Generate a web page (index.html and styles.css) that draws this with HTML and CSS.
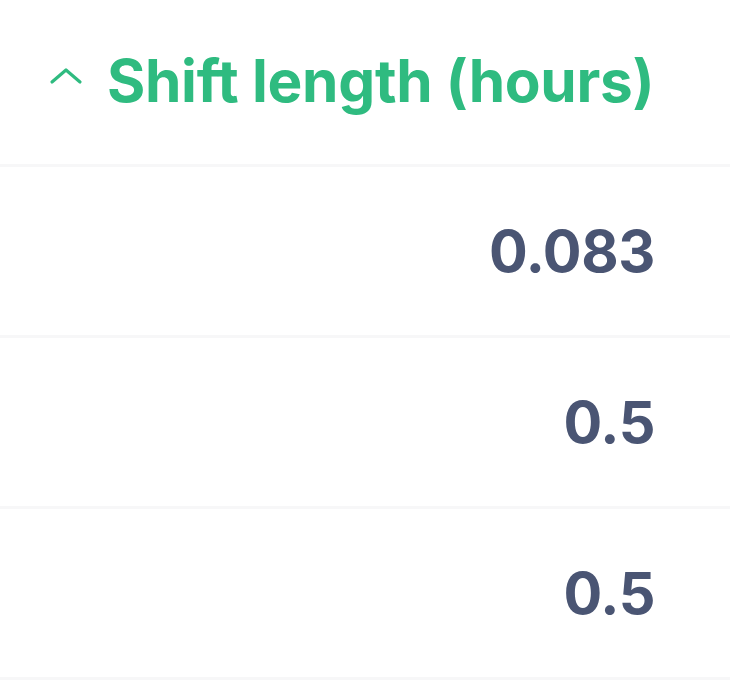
FILE: index.html
```html
<!DOCTYPE html>
<html>
<head>
<meta charset="utf-8">
<link rel="stylesheet" href="styles.css">
</head>
<body>
<div class="table">
  <div class="head">
    <svg class="chev" viewBox="0 0 34 18" width="34" height="18"><path d="M3 15 L17 3 L31 15" fill="none" stroke="#2fbb80" stroke-width="3.2" stroke-linecap="round" stroke-linejoin="round"/></svg>
    <span class="title">Shift length (hours)</span>
  </div>
  <div class="row"><span class="num">0.083</span></div>
  <div class="row"><span class="num">0.5</span></div>
  <div class="row"><span class="num">0.5</span></div>
</div>
</body>
</html>
```
FILE: styles.css
```css
html, body {
  margin: 0;
  padding: 0;
  background: #ffffff;
}
.table {
  width: 730px;
  font-family: Inter, "Noto Sans", sans-serif;
  font-weight: 700;
}
.head {
  height: 167px;
  display: flex;
  align-items: center;
  padding-left: 49px;
  padding-bottom: 4px;
  gap: 24px;
  border-bottom: 3px solid #f7f7f8;
  box-sizing: border-box;
}
.chev {
  display: block;
  margin-top: -8px;
}
.title {
  color: #2fbb80;
  font-size: 58.5px;
  letter-spacing: -0.3px;
}
.row {
  height: 171px;
  display: flex;
  align-items: center;
  justify-content: flex-end;
  padding-right: 75px;
  border-bottom: 3px solid #f7f7f8;
  box-sizing: border-box;
  background: #ffffff;
}
.num {
  color: #4a5573;
  font-size: 57.5px;
  letter-spacing: -0.4px;
}
```
